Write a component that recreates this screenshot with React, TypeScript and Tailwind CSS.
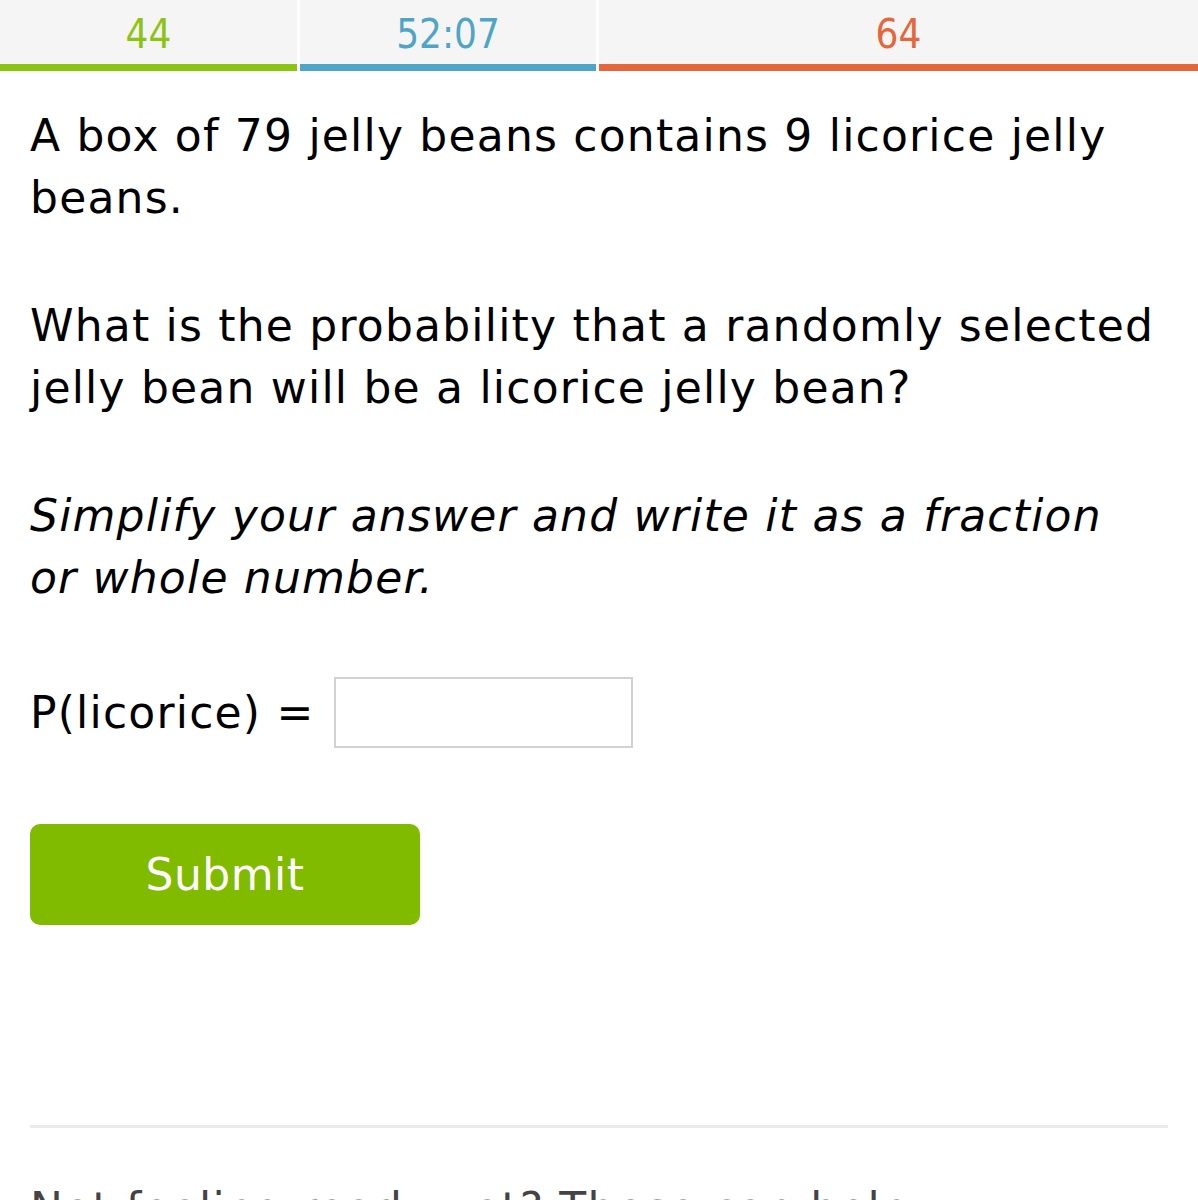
import React from 'react';

const stats = [
    { value: '44', text: 'text-[#8cc414]', bar: 'bg-[#8cc414]', width: 'w-[297px]' },
    { value: '52:07', text: 'text-[#4ea5c6]', bar: 'bg-[#4ea5c6]', width: 'w-[296px]' },
    { value: '64', text: 'text-[#e4663a]', bar: 'bg-[#e4663a]', width: 'flex-1' },
];

export default function App() {
    return (
        <div className="w-[1198px] min-h-[1200px] bg-white text-black overflow-hidden" style={{ fontFamily: '"DejaVu Sans", Verdana, sans-serif' }}>
            {/* Score / timer / smartscore strip */}
            <div className="flex gap-[3px] bg-white">
                {stats.map((s) => (
                    <div key={s.value} className={`${s.width} flex flex-col`}>
                        <div className={`h-[64px] bg-[#f5f5f5] flex items-center justify-center text-[40px] leading-none ${s.text}`} style={{ fontFamily: '"DejaVu Sans Condensed", "DejaVu Sans", sans-serif' }}>
                            <span className="pt-1">{s.value}</span>
                        </div>
                        <div className={`h-[7px] ${s.bar}`} />
                    </div>
                ))}
            </div>

            <div className="px-[30px] pt-[34px] text-[44px] leading-[62px] tracking-[1.2px]">
                <p>A box of 79 jelly beans contains 9 licorice jelly beans.</p>
                <p className="mt-[66px]">What is the probability that a randomly selected jelly bean will be a licorice jelly bean?</p>
                <p className="mt-[66px] italic max-w-[1110px]">Simplify your answer and write it as a fraction or whole number.</p>

                <div className="mt-[68px] flex items-center gap-[20px]">
                    <span>P(licorice) =</span>
                    <div className="w-[299px] h-[71px] border-2 border-[#d2d2d2] bg-white" />
                </div>

                <button className="mt-[76px] w-[390px] h-[101px] rounded-[10px] bg-[#80bb00] text-white text-[44px] tracking-[0.5px]">
                    Submit
                </button>

                <div className="mt-[200px] h-[3px] bg-[#ebebeb] w-[1138px]" />

                <p className="mt-[50px] text-[#444]">Not feeling ready yet? These can help:</p>
            </div>
        </div>
    );
}
